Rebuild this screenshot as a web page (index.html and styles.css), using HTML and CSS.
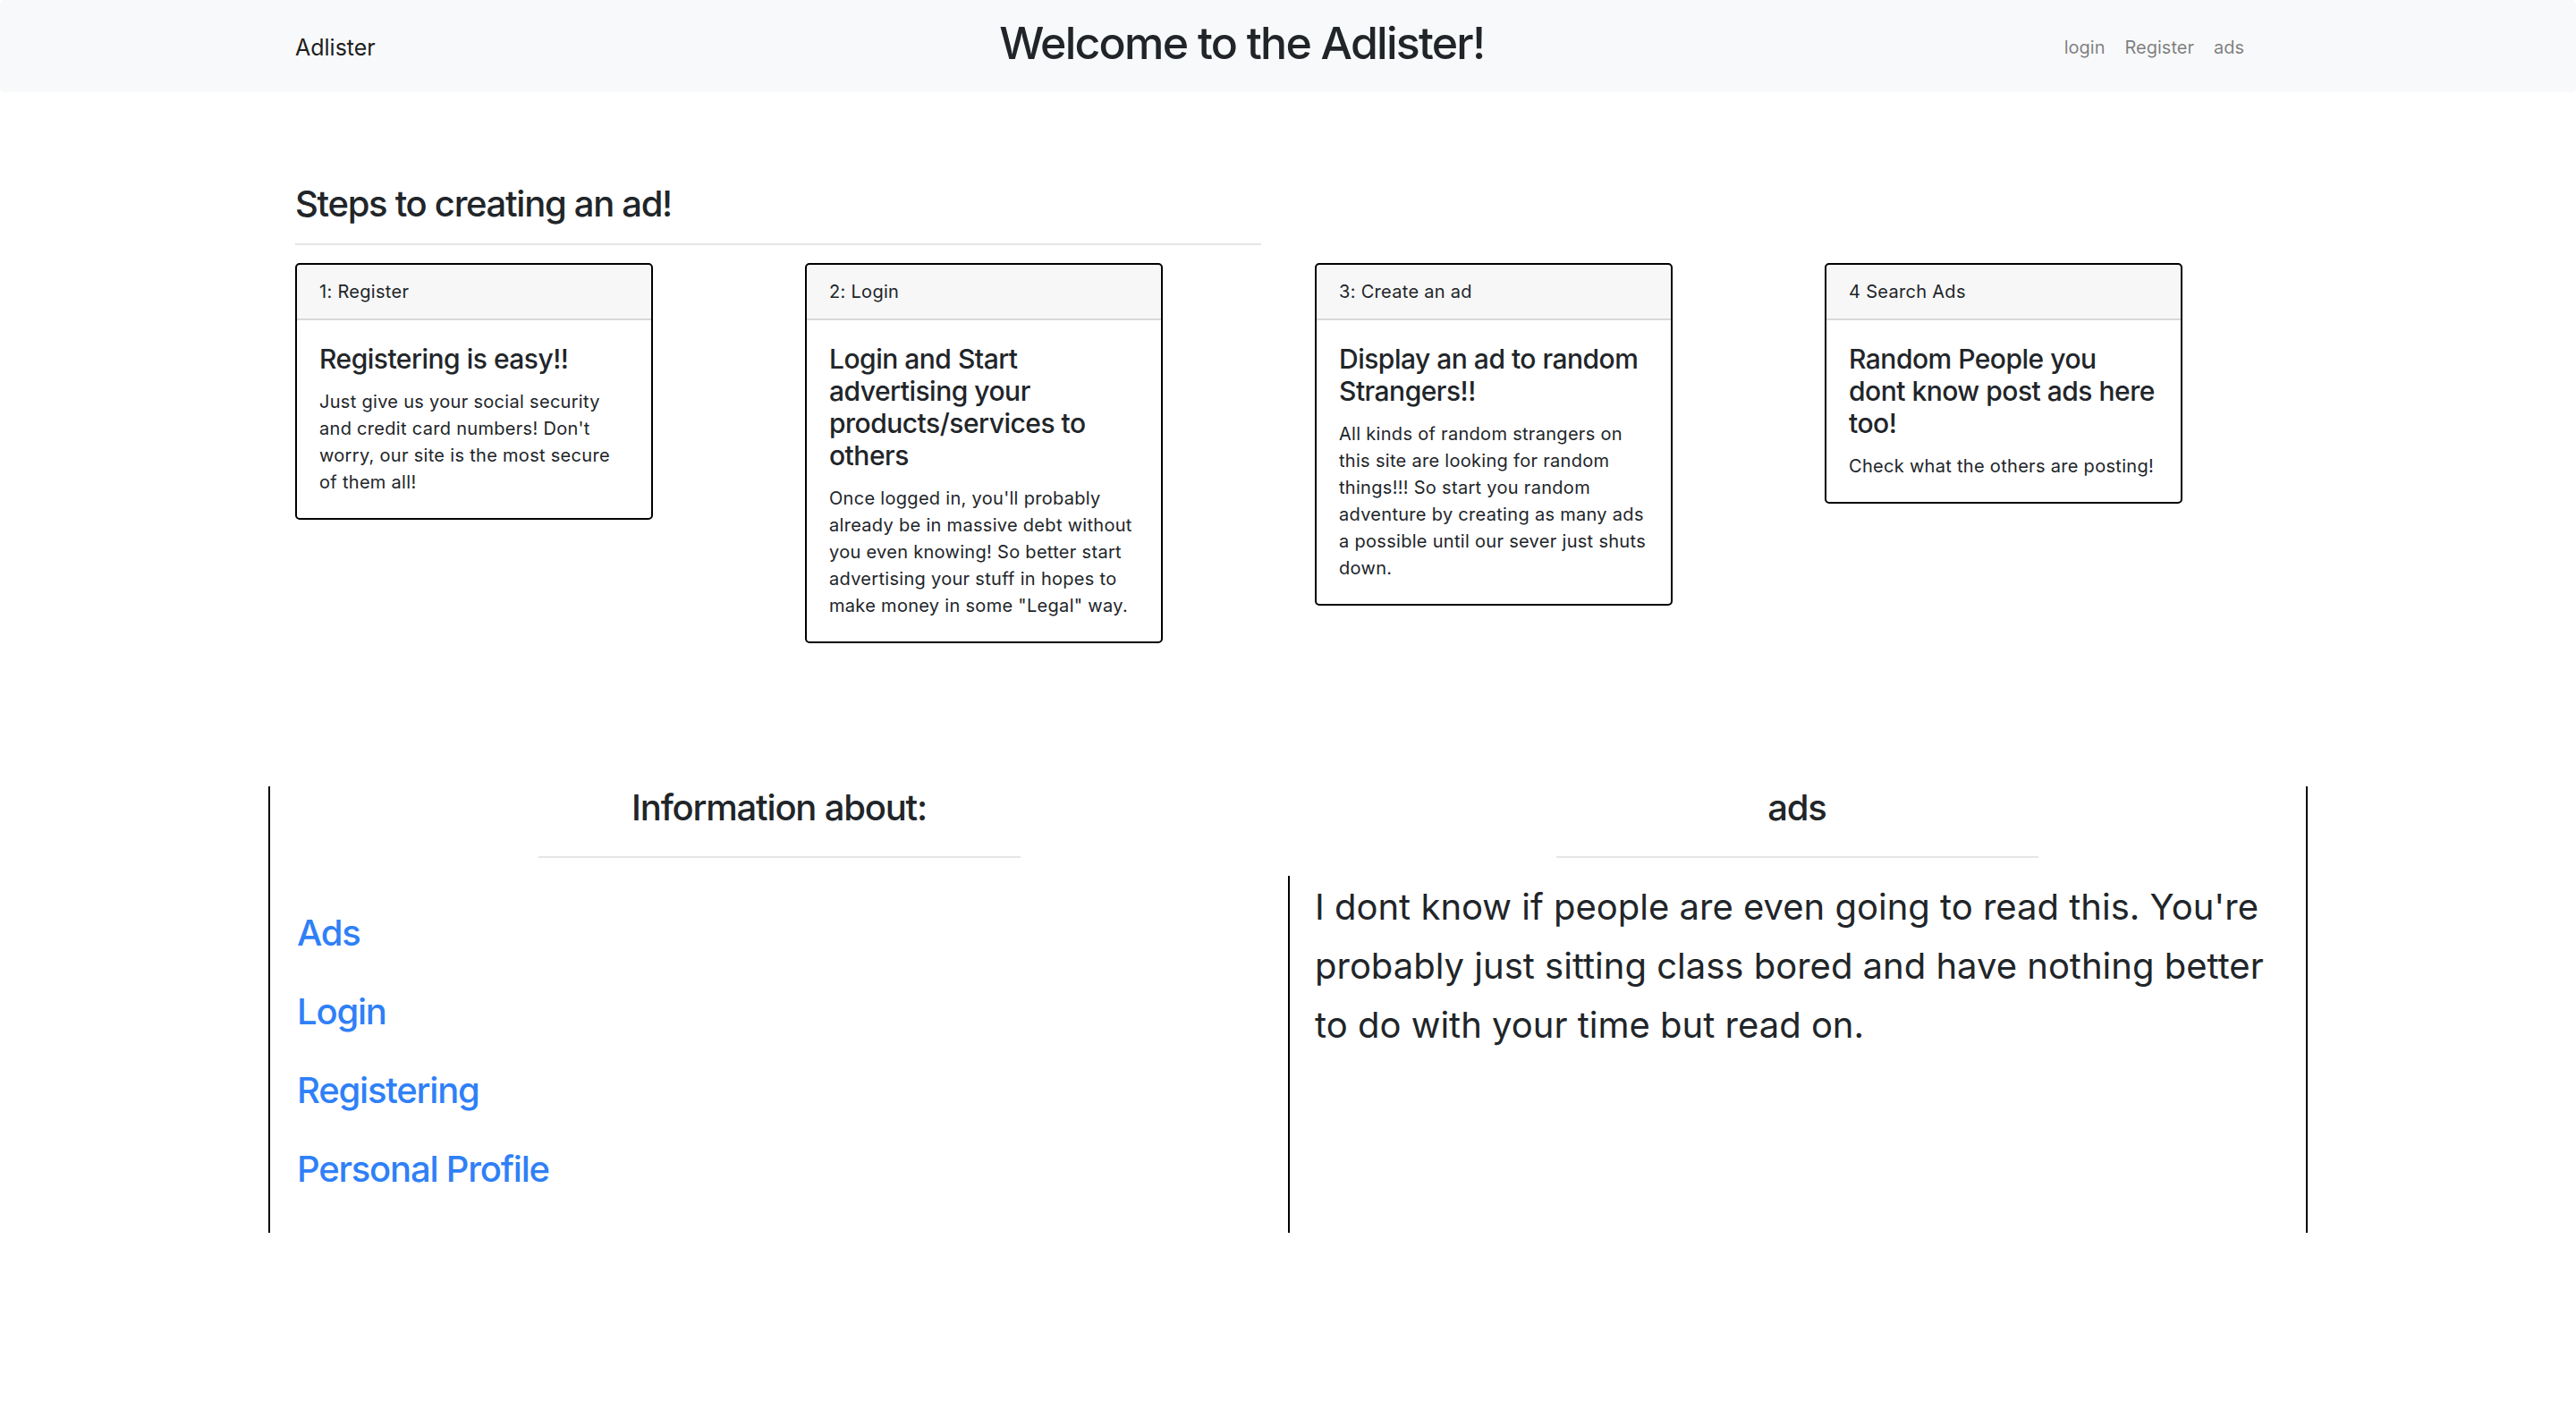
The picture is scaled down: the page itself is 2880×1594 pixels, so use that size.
FILE: index.html
```html
<!DOCTYPE html>
<html lang="en">
<head>
<meta charset="utf-8">
<title>Adlister</title>
<link rel="stylesheet" href="styles.css">
</head>
<body>
<nav class="navbar">
  <div class="container navbar-inner">
    <a class="brand" href="#">Adlister</a>
    <h1 class="welcome">Welcome to the Adlister!</h1>
    <ul class="nav">
      <li><a href="#">login</a></li>
      <li><a href="#">Register</a></li>
      <li><a href="#">ads</a></li>
    </ul>
  </div>
</nav>

<main class="container">
  <section class="steps">
    <div class="steps-head">
      <h2 class="steps-title">Steps to creating an ad!</h2>
      <hr class="rule">
    </div>
    <div class="cards">
      <div class="card-col">
        <div class="card">
          <div class="card-header">1: Register</div>
          <div class="card-body">
            <h4 class="card-title">Registering is easy!!</h4>
            <p class="card-text">Just give us your social security and credit card numbers! Don't worry, our site is the most secure of them all!</p>
          </div>
        </div>
      </div>
      <div class="card-col">
        <div class="card">
          <div class="card-header">2: Login</div>
          <div class="card-body">
            <h4 class="card-title">Login and Start advertising your products/services to others</h4>
            <p class="card-text">Once logged in, you'll probably already be in massive debt without you even knowing! So better start advertising your stuff in hopes to make money in some "Legal" way.</p>
          </div>
        </div>
      </div>
      <div class="card-col">
        <div class="card">
          <div class="card-header">3: Create an ad</div>
          <div class="card-body">
            <h4 class="card-title">Display an ad to random Strangers!!</h4>
            <p class="card-text">All kinds of random strangers on this site are looking for random things!!! So start you random adventure by creating as many ads a possible until our sever just shuts down.</p>
          </div>
        </div>
      </div>
      <div class="card-col">
        <div class="card">
          <div class="card-header">4 Search Ads</div>
          <div class="card-body">
            <h4 class="card-title">Random People you dont know post ads here too!</h4>
            <p class="card-text">Check what the others are posting!</p>
          </div>
        </div>
      </div>
    </div>
  </section>

  <section class="info">
    <div class="info-col info-left">
      <h3 class="info-title">Information about:</h3>
      <hr class="rule short">
      <ul class="links">
        <li><a href="#">Ads</a></li>
        <li><a href="#">Login</a></li>
        <li><a href="#">Registering</a></li>
        <li><a href="#">Personal Profile</a></li>
      </ul>
    </div>
    <div class="info-col info-right">
      <h3 class="info-title">ads</h3>
      <hr class="rule short">
      <div class="ads-body">
        <p class="ads-text">I dont know if people are even going to read this. You're probably just sitting class bored and have nothing better to do with your time but read on.</p>
      </div>
    </div>
  </section>
</main>
</body>
</html>
```
FILE: styles.css
```css
*, *::before, *::after { box-sizing: border-box; }

html, body { margin: 0; padding: 0; }

body {
  font-family: Inter, "Liberation Sans", sans-serif;
  font-size: 20px;
  line-height: 1.5;
  letter-spacing: 0.3px;
  color: #212529;
  background: #fff;
}

a { text-decoration: none; }

.container {
  width: 2280px;
  margin: 0 auto;
  padding: 0 30px;
}

/* Navbar */
.navbar {
  background: #f8f9fa;
  border-radius: 5px;
  padding: 18px 0 15px;
}

.navbar-inner {
  display: flex;
  align-items: center;
  justify-content: space-between;
}

.brand {
  font-size: 25px;
  line-height: 37.5px;
  padding: 7px 0 5px;
  margin-right: 20px;
  letter-spacing: 0;
  color: rgba(0, 0, 0, 0.9);
}

.welcome {
  font-size: 50px;
  font-weight: 500;
  line-height: 60px;
  letter-spacing: -1.75px;
  margin: 0 0 10px 40px;
}

.nav {
  display: flex;
  list-style: none;
  margin: 0 30px 0 0;
  padding: 0;
}

.nav a {
  display: block;
  padding: 10px 11px;
  letter-spacing: 0;
  color: rgba(0, 0, 0, 0.5);
}

/* Steps */
.steps-head { width: 1080px; }

.steps-title {
  font-size: 40px;
  font-weight: 500;
  line-height: 48px;
  letter-spacing: -1.3px;
  margin: 101px 0 0;
}

.rule {
  border: 0;
  border-top: 2px solid rgba(0, 0, 0, 0.1);
  margin: 20px 0;
  height: 0;
}

.cards {
  display: grid;
  grid-template-columns: repeat(4, 1fr);
  column-gap: 60px;
  align-items: start;
}

.card {
  width: 400px;
  border: 2px solid #000;
  border-radius: 5px;
  overflow: hidden;
  background: #fff;
}

.card-header {
  padding: 15px 25px;
  background: rgba(0, 0, 0, 0.03);
  border-bottom: 2px solid rgba(0, 0, 0, 0.125);
}

.card-body { padding: 25px; }

.card-title {
  font-size: 30px;
  font-weight: 500;
  line-height: 36px;
  letter-spacing: -0.5px;
  margin: 0 0 15px;
}

.card-text { margin: 0; }

/* Info */
.info {
  display: grid;
  grid-template-columns: 1fr 1fr;
  margin: 160px -30px 0;
}

.info-col {
  display: flex;
  flex-direction: column;
  padding: 0 30px;
}

.info-left { border-left: 2px solid #000; }
.info-right { border-right: 2px solid #000; }

.info-title {
  font-size: 40px;
  font-weight: 500;
  line-height: 48px;
  letter-spacing: -1.2px;
  margin: 0;
  text-align: center;
}

.rule.short {
  width: 50%;
  margin: 30px auto 20px;
}

.links {
  list-style: none;
  margin: 20px 0 0;
  padding: 0 0 27px;
}

.links li {
  font-size: 40px;
  font-weight: 500;
  line-height: 88px;
  letter-spacing: -1.2px;
}

.links a { color: #2f80f7; }

.ads-body {
  flex: 1;
  margin-left: -30px;
  padding: 2px 0 0 28px;
  border-left: 2px solid #000;
}

.ads-text {
  font-size: 40px;
  line-height: 66px;
  letter-spacing: 0;
  margin: 0;
}
```
